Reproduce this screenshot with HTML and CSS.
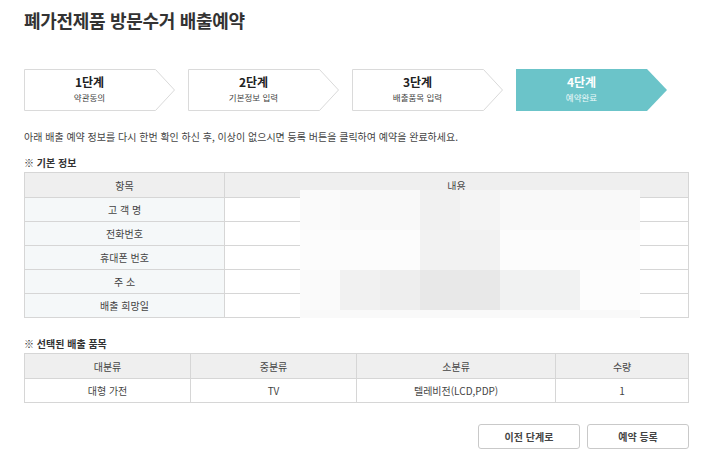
FILE: index.html
```html
<!DOCTYPE html>
<html lang="ko">
<head>
    <meta charset="UTF-8">
    <title>폐가전제품 방문수거 배출예약</title>
    <link rel="stylesheet" href="styles.css">
</head>
<body>
    <div class="wrap">
        <h1 class="page-title">폐가전제품 방문수거 배출예약</h1>

        <ol class="steps">
            <li class="step">
                <svg class="step-bg" width="152" height="42" viewBox="0 0 152 42"><polygon points="0.5,0.5 131.5,0.5 150.5,21 131.5,41.5 0.5,41.5" fill="#fff" stroke="#dadada"/></svg>
                <div class="step-num">1단계</div>
                <div class="step-name">약관동의</div>
            </li>
            <li class="step">
                <svg class="step-bg" width="152" height="42" viewBox="0 0 152 42"><polygon points="0.5,0.5 131.5,0.5 150.5,21 131.5,41.5 0.5,41.5" fill="#fff" stroke="#dadada"/></svg>
                <div class="step-num">2단계</div>
                <div class="step-name">기본정보 입력</div>
            </li>
            <li class="step">
                <svg class="step-bg" width="152" height="42" viewBox="0 0 152 42"><polygon points="0.5,0.5 131.5,0.5 150.5,21 131.5,41.5 0.5,41.5" fill="#fff" stroke="#dadada"/></svg>
                <div class="step-num">3단계</div>
                <div class="step-name">배출품목 입력</div>
            </li>
            <li class="step on">
                <svg class="step-bg" width="152" height="42" viewBox="0 0 152 42"><polygon points="0,0 131,0 151,21 131,42 0,42" fill="#6bc4c9"/></svg>
                <div class="step-num">4단계</div>
                <div class="step-name">예약완료</div>
            </li>
        </ol>

        <p class="intro">아래 배출 예약 정보를 다시 한번 확인 하신 후, 이상이 없으시면 등록 버튼을 클릭하여 예약을 완료하세요.</p>

        <h2 class="sec-title">※ 기본 정보</h2>
        <div class="info-box">
            <table class="tbl info">
                <thead>
                    <tr><th class="col-head">항목</th><th>내용</th></tr>
                </thead>
                <tbody>
                    <tr><th>고 객 명</th><td></td></tr>
                    <tr><th>전화번호</th><td></td></tr>
                    <tr><th>휴대폰 번호</th><td></td></tr>
                    <tr><th>주 소</th><td></td></tr>
                    <tr><th>배출 희망일</th><td></td></tr>
                </tbody>
            </table>
            <!-- personal data masked -->
            <div class="mosaic">
                <div class="mosaic-row r1"></div>
                <div class="mosaic-row r2"></div>
                <div class="mosaic-row r3"></div>
                <div class="mosaic-row r4"></div>
            </div>
        </div>

        <h2 class="sec-title sec2">※ 선택된 배출 품목</h2>
        <table class="tbl items">
            <thead>
                <tr><th>대분류</th><th>중분류</th><th>소분류</th><th>수량</th></tr>
            </thead>
            <tbody>
                <tr><td>대형 가전</td><td>TV</td><td>텔레비전(LCD,PDP)</td><td>1</td></tr>
            </tbody>
        </table>

        <div class="btns">
            <button class="btn">이전 단계로</button>
            <button class="btn">예약 등록</button>
        </div>
    </div>
</body>
</html>
```

FILE: styles.css
```css
body {
    margin: 0;
    font-family: "Noto Sans CJK KR", "Noto Sans", sans-serif;
    color: #333;
    background: #fff;
}
.wrap {
    width: 665px;
    padding-left: 24px;
}
.page-title {
    margin: 0;
    padding-top: 7px;
    font-size: 18px;
    line-height: 26px;
    font-weight: bold;
    color: #333;
    letter-spacing: -0.3px;
}
.steps {
    list-style: none;
    margin: 36px 0 0;
    padding: 0;
    display: flex;
    gap: 13px;
}
.step {
    position: relative;
    width: 151px;
    height: 41px;
}
.step-bg {
    position: absolute;
    left: 0;
    top: 0;
}
.step-num,
.step-name {
    position: relative;
    width: 131px;
    text-align: center;
}
.step-num {
    padding-top: 5px;
    font-size: 12px;
    line-height: 16px;
    font-weight: bold;
    color: #222;
}
.step-name {
    font-size: 8.5px;
    line-height: 14px;
    color: #444;
}
.step.on .step-num {
    color: #fff;
}
.step.on .step-name {
    color: #eefafa;
}
.intro {
    margin: 19px 0 0;
    font-size: 10px;
    line-height: 16px;
    color: #444;
}
.sec-title {
    margin: 11px 0 2px;
    font-size: 10px;
    line-height: 14px;
    font-weight: bold;
    color: #333;
}
.sec2 {
    margin-top: 19px;
}
.tbl {
    width: 665px;
    border-collapse: collapse;
    font-size: 10px;
    color: #444;
}
.tbl th,
.tbl td {
    border: 1px solid #d6d6d6;
    padding: 0;
    text-align: center;
    font-weight: normal;
}
.tbl thead th {
    background: #efefef;
    height: 24px;
}
.info tbody th {
    background: #f5f8f9;
    height: 23px;
}
.info .col-head {
    width: 199px;
}
.items td {
    height: 23px;
}
.items th:nth-child(1),
.items th:nth-child(2) {
    width: 25%;
}
.items th:nth-child(3) {
    width: 30%;
}
.info-box {
    position: relative;
}
.mosaic {
    position: absolute;
    left: 276px;
    top: 18px;
    width: 340px;
}
.mosaic-row {
    height: 40px;
}
.r1 {
    background: linear-gradient(to right, #fafafa 0 40px, #f9f9f9 40px 120px, #f1f1f1 120px 160px, #f4f4f4 160px 200px, #f9f9f9 200px);
}
.r2 {
    background: linear-gradient(to right, #fcfcfc 0 120px, #f2f2f2 120px 200px, #fcfcfc 200px);
}
.r3 {
    background: linear-gradient(to right, #fafafa 0 40px, #f1f1f1 40px 80px, #eeeeee 80px 120px, #e8e8e8 120px 200px, #f1f2f2 200px 280px, #fdfdfd 280px);
}
.r4 {
    height: 8px;
    background: #f9f9f9;
}
.btns {
    margin-top: 21px;
    display: flex;
    justify-content: flex-end;
    gap: 7px;
}
.btn {
    width: 102px;
    height: 25px;
    background: #fff;
    border: 1px solid #c9c9c9;
    border-radius: 3px;
    font-family: inherit;
    font-size: 10px;
    font-weight: bold;
    color: #444;
    cursor: pointer;
}
```
